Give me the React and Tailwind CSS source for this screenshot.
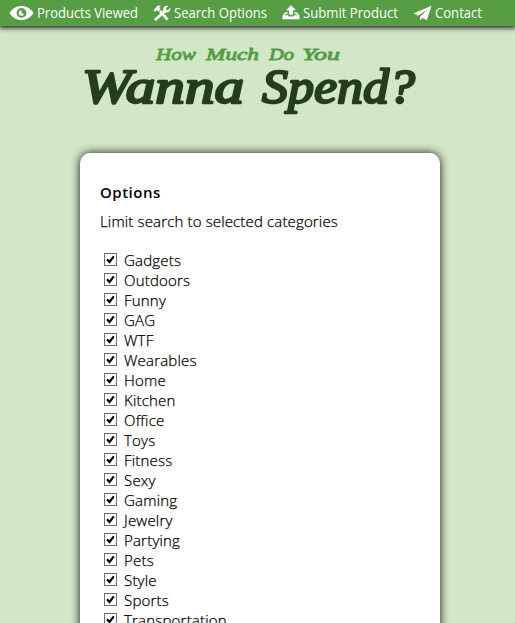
const categories = [
  "Gadgets",
  "Outdoors",
  "Funny",
  "GAG",
  "WTF",
  "Wearables",
  "Home",
  "Kitchen",
  "Office",
  "Toys",
  "Fitness",
  "Sexy",
  "Gaming",
  "Jewelry",
  "Partying",
  "Pets",
  "Style",
  "Sports",
  "Transportation",
];

function EyeIcon() {
  return (
    <svg className="w-[25px] h-4 shrink-0" viewBox="0 0 25 16" fill="none">
      <path d="M0.5 8C3.5 3.2 7.5 1 12.5 1s9 2.2 12 7c-3 4.8-7 7-12 7s-9-2.2-12-7Z" fill="#fff" />
      <circle cx="12.5" cy="7.9" r="4.9" fill="#569d44" />
      <path d="M12.7 5.2a2.8 2.8 0 1 0 2.6 3.2c-1.2.8-2.8.2-2.9-1.2 0-.8.1-1.3.3-2Z" fill="#fff" />
    </svg>
  );
}

function ToolsIcon() {
  return (
    <svg className="w-[18px] h-4 shrink-0" viewBox="0 0 18 16" fill="none">
      <path d="M0.5 5.4 4 1.3C5.3.2 7 .3 8.2 1.1 6.6 1.3 6 2.1 6.5 3l1.1 1.3-2.4 2.2-1.4-1.4L2.2 6.8Z" fill="#fff" />
      <path d="m7 6 7.6 8.7" stroke="#fff" strokeWidth="2.7" />
      <path d="m2.8 14.2 8.9-8" stroke="#fff" strokeWidth="2.7" strokeLinecap="round" />
      <path d="M15.3 1 13 3.3l.3 1.5 1.6.2 2.3-2.2c.6 2.5-.8 4.6-3.2 4.6l-2.1.7-2-2 .5-1.9C10.5 1.8 12.6.2 15.3 1Z" fill="#fff" />
    </svg>
  );
}

function UploadIcon() {
  return (
    <svg className="w-[18px] h-4 shrink-0" viewBox="0 0 18 16" fill="#fff">
      <path d="M9 0.2 14 5.2h-3.1v4.6H7.1V5.2H4Z" />
      <path d="M3.2 7.2h2.5v1.5H4L2.9 10.3h3.3v1.3h5.6v-1.3h3.3L14 8.7h-1.7V7.2h2.5l2.7 3.3v3.8H.5v-3.8Z" />
    </svg>
  );
}

function PlaneIcon() {
  return (
    <svg className="w-[19px] h-4 shrink-0" viewBox="0 0 19 16" fill="#fff">
      <path d="M18.5.8.5 8.6l4.7 2.1L15 4 7.1 11.8l-.1 3.7 2.4-2.4 4.5 1.8Z" />
    </svg>
  );
}

function NavItem({ icon, label, className, width }) {
  return (
    <a className={"flex items-center h-[26px] whitespace-nowrap " + className}>
      {icon}
      <svg className="h-[26px] ml-[3px] overflow-visible" width={width} height="26">
        <text x="0" y="18" textLength={width} lengthAdjust="spacingAndGlyphs" fill="#fff" fontSize="14">
          {label}
        </text>
      </svg>
    </a>
  );
}

const words = [
  { text: "How", x: 156, width: 40 },
  { text: "Much", x: 206, width: 53 },
  { text: "Do", x: 269, width: 25 },
  { text: "You", x: 302, width: 38 },
];

function Logo() {
  return (
    <svg className="block mx-auto w-[340px] h-[82px]" viewBox="80 40 340 82" role="img">
      <g fontFamily="'Liberation Serif', serif" fontStyle="italic" strokeLinejoin="round" strokeLinecap="round">
        <g fontSize="16" fill="#549d44" stroke="#549d44" strokeWidth="0.8">
          {words.map((word) => (
            <text key={word.text} x={word.x} y="60" textLength={word.width} lengthAdjust="spacingAndGlyphs">
              {word.text}
            </text>
          ))}
        </g>
        <g fontSize="49" fill="#243d1d" stroke="#243d1d" strokeWidth="2.4">
          <text x="82" y="102.5" textLength="162" lengthAdjust="spacingAndGlyphs">Wanna</text>
          <text x="262" y="102.5" textLength="153" lengthAdjust="spacingAndGlyphs">Spend?</text>
        </g>
      </g>
    </svg>
  );
}

function Category({ name }) {
  return (
    <label className="flex items-center h-5">
      <span className="w-[13px] h-[13px] ml-1 mr-[7px] -mt-px border border-[#707070] bg-white shrink-0">
        <svg className="block w-[11px] h-[11px]" viewBox="0 0 11 11" fill="none">
          <path d="M2 5.2 4.5 8 8.8 2.3" stroke="#000" strokeWidth="2.1" />
        </svg>
      </span>
      <span>{name}</span>
    </label>
  );
}

function App() {
  return (
    <div className="h-[623px] overflow-hidden bg-[#d2e7c6] font-['Open_Sans','Noto_Sans',sans-serif] font-light text-[15px] text-black">
      <nav className="relative flex h-[26px] bg-[#569d44] font-normal shadow-[0_1px_5px_1px_rgba(0,0,0,0.85)]">
        <NavItem className="ml-[9px]" icon={<EyeIcon />} label="Products Viewed" width={101} />
        <NavItem className="ml-[15px]" icon={<ToolsIcon />} label="Search Options" width={93} />
        <NavItem className="ml-[15px]" icon={<UploadIcon />} label="Submit Product" width={95} />
        <NavItem className="ml-[15px]" icon={<PlaneIcon />} label="Contact" width={47} />
      </nav>

      <header className="pt-[14px] -ml-[15px]">
        <Logo />
      </header>

      <main className="w-[360px] h-[520px] mt-[31px] ml-20 px-5 pt-[29px] bg-white rounded-[10px] shadow-[0_0_10px_rgba(0,0,0,0.9)]">
        <h1 className="h-5 leading-5 text-[15px] font-semibold tracking-[0.5px]">Options</h1>
        <p className="mt-[9px] h-5 leading-5 tracking-[0.15px] whitespace-nowrap [-webkit-text-stroke:0.25px_#000]">
          Limit search to selected categories
        </p>
        <div className="mt-[19px] leading-5 tracking-[0.2px] [-webkit-text-stroke:0.25px_#000]">
          {categories.map((name) => (
            <Category key={name} name={name} />
          ))}
        </div>
      </main>
    </div>
  );
}

export default App;
